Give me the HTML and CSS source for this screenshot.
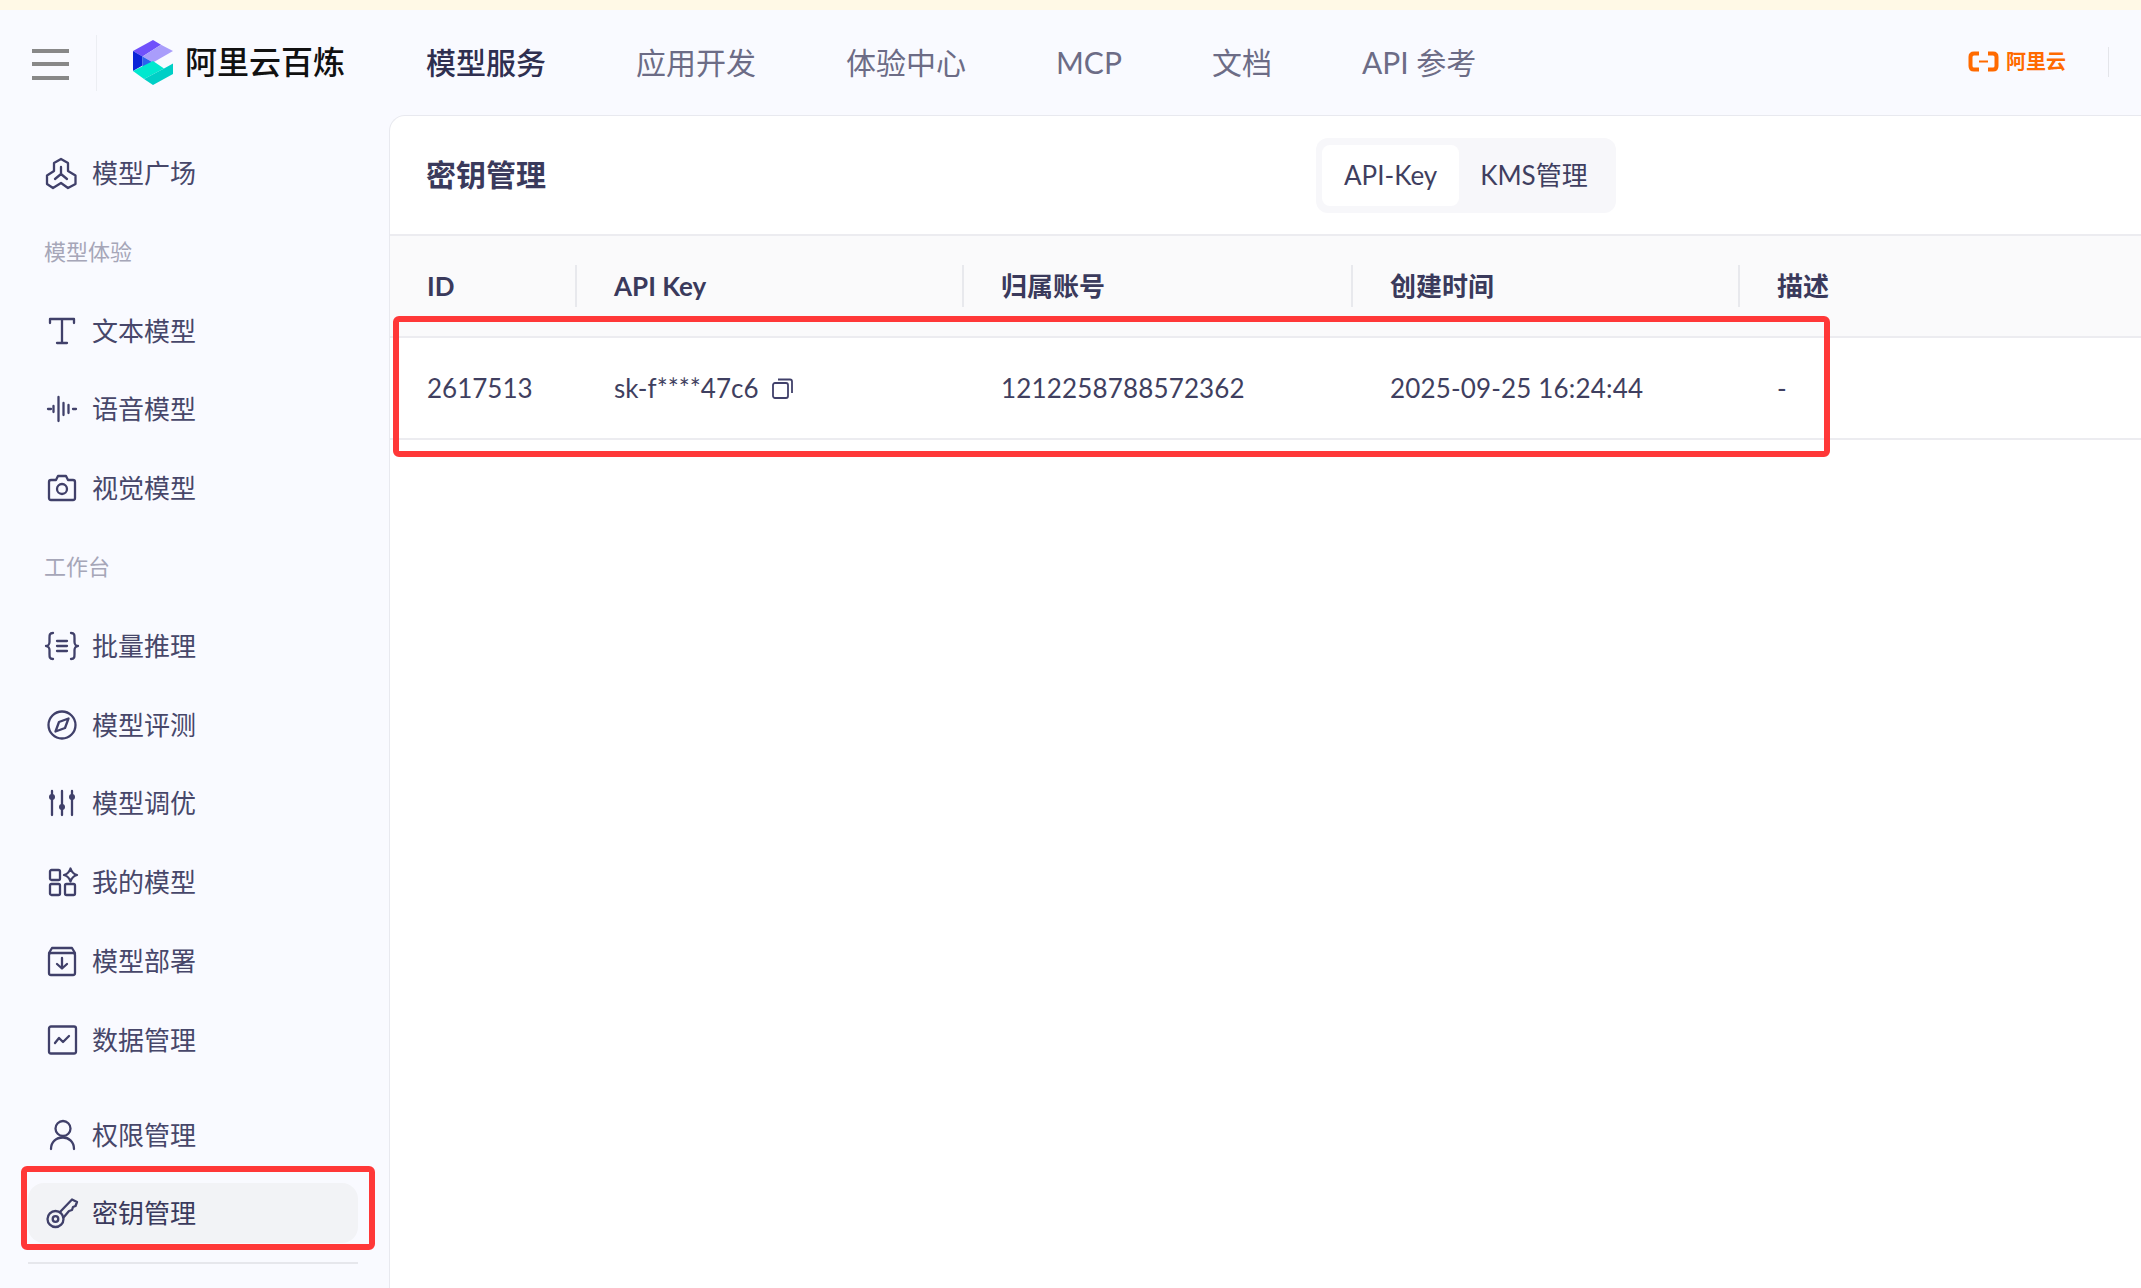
FILE: index.html
```html
<!DOCTYPE html>
<html lang="zh-CN">
<head>
<meta charset="utf-8">
<title>密钥管理</title>
<link rel="stylesheet" href="styles.css">
</head>
<body>
<div class="notice"></div>
<header class="topbar">
  <div class="menu-btn"><span></span><span></span><span></span></div>
  <div class="brand">
    <svg class="logo" viewBox="0 0 40 45" width="40" height="45">
      <polygon points="20,0 28,4.7 9.5,16.5 0,11" fill="#7050fb"/>
      <polygon points="28,4.7 40,11 20,22.5 9.5,16.5" fill="#a99dfb"/>
      <polygon points="0,11 9.5,16.5 9.5,25.5 0,31" fill="#0a24d8"/>
      <polygon points="9.5,16.5 20,22.5 9.5,28" fill="#2b62ee"/>
      <polygon points="0,31 20,21 31,28.5 11,39" fill="#00e8cf"/>
      <polygon points="40,23.5 40,34 20,45 11,39 31,28.5" fill="#00cfc6"/>
    </svg>
    <span class="brand-name">阿里云百炼</span>
  </div>
  <nav class="main-nav">
    <a class="main-link active">模型服务</a>
    <a class="main-link">应用开发</a>
    <a class="main-link">体验中心</a>
    <a class="main-link">MCP</a>
    <a class="main-link">文档</a>
    <a class="main-link">API 参考</a>
  </nav>
  <div class="aliyun">
    <svg viewBox="0 0 31 21" width="31" height="21" fill="none" stroke="#ff6a00">
      <path d="M11 2.5H6Q2.5 2.5 2.5 6V15Q2.5 18.500 6 18.500H11" stroke-width="4"/>
      <path d="M20 2.500H25Q28.500 2.500 28.500 6V15Q28.500 18.500 25 18.500H20" stroke-width="4"/>
      <path d="M11 10.500H20" stroke-width="2"/>
    </svg>
    <span class="aliyun-name">阿里云</span>
  </div>
  <div class="top-divider"></div>
</header>
<div class="workspace">
  <aside class="sidebar">
    <a class="side-item">
      <svg class="ico" viewBox="0 0 30 30"><path d="M14 1L21 5V13L28.500 17.500V26L21 30L14 25L6 30L0 26V17.500L7 13V5Z"/><path d="M14 9V16M14 16L8 21M14 16L20 21"/></svg>
      <span>模型广场</span>
    </a>
    <div class="side-label">模型体验</div>
    <a class="side-item">
      <svg class="ico" viewBox="0 0 30 30"><path d="M3 7V3H27V7M15 3V27M10 27H20"/></svg>
      <span>文本模型</span>
    </a>
    <a class="side-item">
      <svg class="ico" viewBox="0 0 30 30"><path d="M1 15H4M6.500 12V18M11.500 3V27M16.500 9V21M21.500 11V19M26 15H29"/></svg>
      <span>语音模型</span>
    </a>
    <a class="side-item">
      <svg class="ico" viewBox="0 0 30 30"><path d="M4 7H9L11 3H19L21 7H26Q28 7 28 9V25Q28 27 26 27H4Q2 27 2 25V9Q2 7 4 7Z"/><circle cx="15" cy="16" r="5"/></svg>
      <span>视觉模型</span>
    </a>
    <div class="side-label">工作台</div>
    <a class="side-item">
      <svg class="ico" viewBox="0 0 30 30"><path d="M6 2C2.500 2 2.500 4 2.500 7V11C2.500 13 1 15 -1 15C1 15 2.500 17 2.500 19V23C2.500 26 2.500 28 6 28"/><path d="M24 2C27.500 2 27.500 4 27.500 7V11C27.500 13 29 15 31 15C29 15 27.500 17 27.500 19V23C27.500 26 27.500 28 24 28"/><path d="M10 10H20M10 15H20M10 20H20"/></svg>
      <span>批量推理</span>
    </a>
    <a class="side-item">
      <svg class="ico" viewBox="0 0 30 30"><circle cx="15" cy="15" r="13.500"/><path d="M21.500 8.500L18 18L8.500 21.500L12 12Z"/></svg>
      <span>模型评测</span>
    </a>
    <a class="side-item">
      <svg class="ico" viewBox="0 0 30 30"><path d="M5 3V27M15 3V27M25 3V27"/><circle class="dot" cx="5" cy="9" r="3"/><circle class="dot" cx="15" cy="19" r="3"/><circle class="dot" cx="25" cy="9" r="3"/></svg>
      <span>模型调优</span>
    </a>
    <a class="side-item">
      <svg class="ico" viewBox="0 0 30 30"><rect x="3" y="3" width="10" height="10" rx="1.500"/><rect x="3" y="17" width="10" height="11" rx="1.500"/><rect x="18" y="17" width="10" height="11" rx="1.500"/><path d="M23.500 1.500Q25 6.500 30 8Q25 9.500 23.500 14.500Q22 9.500 17 8Q22 6.500 23.500 1.500Z"/></svg>
      <span>我的模型</span>
    </a>
    <a class="side-item">
      <svg class="ico" viewBox="0 0 30 30"><rect x="2" y="7" width="26" height="22" rx="2"/><path d="M2 7L5 2H25L28 7M15 12V22M10 18L15 22.500L20 18"/></svg>
      <span>模型部署</span>
    </a>
    <a class="side-item">
      <svg class="ico" viewBox="0 0 30 30"><rect x="2" y="1.500" width="27" height="27" rx="2"/><path d="M8 18L12 13L16 17L22 11"/></svg>
      <span>数据管理</span>
    </a>
    <a class="side-item group-start">
      <svg class="ico" viewBox="0 0 30 30"><circle cx="16" cy="8.500" r="7.500"/><path d="M4 29C4 22 9 17.500 16 17.500C22 17.500 27 22 27 29"/></svg>
      <span>权限管理</span>
    </a>
    <a class="side-item active">
      <svg class="ico" viewBox="0 0 30 30"><circle cx="8.500" cy="21" r="8"/><circle cx="8.500" cy="21" r="2.800"/><path d="M13 14L25 1.500L30 4L28.500 8L26 9L25 12L22 13L16.500 19.500"/></svg>
      <span>密钥管理</span>
      <i class="callout callout-side"></i>
    </a>
    <div class="side-rule"></div>
  </aside>
  <main class="card">
    <div class="card-head">
      <h1 class="card-title">密钥管理</h1>
      <div class="tabs">
        <a class="tab active">API-Key</a>
        <a class="tab">KMS管理</a>
      </div>
    </div>
    <div class="table">
      <div class="row head">
        <div class="cell">ID</div>
        <div class="cell">API Key</div>
        <div class="cell">归属账号</div>
        <div class="cell">创建时间</div>
        <div class="cell">描述</div>
      </div>
      <div class="row body">
        <div class="cell">2617513</div>
        <div class="cell key-cell">sk-f****47c6
          <svg class="copy" viewBox="0 0 21 21" width="21" height="21"><rect x="1" y="5" width="15" height="15" rx="2"/><path d="M6 1.500H18Q20 1.500 20 3.500V15"/></svg>
        </div>
        <div class="cell num">1212258788572362</div>
        <div class="cell num">2025-09-25 16:24:44</div>
        <div class="cell">-</div>
        <i class="callout callout-row"></i>
      </div>
    </div>
  </main>
</div>
</body>
</html>
```

FILE: styles.css
```css
* { box-sizing: border-box; }
html, body { margin: 0; height: 100%; }
body {
  background: #f9faff;
  color: #3f3f60;
  font-family: "Lato", "Noto Sans CJK SC", sans-serif;
  overflow: hidden;
}
.notice { height: 10px; background: #fff9e6; }

.topbar { height: 105px; display: flex; align-items: center; position: relative; }
.menu-btn {
  width: 37px; height: 31px; margin-left: 32px;
  display: flex; flex-direction: column; justify-content: space-between;
  margin-top: 3px;
}
.menu-btn span { display: block; height: 4px; background: #888; }
.brand {
  height: 56px; margin-left: 27px; padding-left: 36px;
  border-left: 1px solid #eceef3;
  display: flex; align-items: center; gap: 12px;
}
.logo { display: block; }
.brand-name { font-size: 32px; font-weight: 500; color: #111; white-space: nowrap; line-height: 40px; margin-top: -2px; }
.main-nav { display: flex; gap: 90px; margin-left: 81px; margin-top: -2px; }
.main-link { font-size: 30px; line-height: 40px; color: #6c6c86; white-space: nowrap; }
.main-link.active { color: #2f2f50; font-weight: 500; }
.aliyun { position: absolute; left: 1968px; top: 41px; display: flex; align-items: center; gap: 7px; }
.aliyun-name { font-size: 20px; line-height: 21px; color: #ff6a00; font-weight: 700; }
.top-divider { position: absolute; left: 2108px; top: 37px; width: 1px; height: 30px; background: #e4e5ea; }

.workspace { display: flex; height: 1173px; }
.sidebar {
  width: 389px; flex: none;
  padding: 28px 31px 0 28px;
  display: flex; flex-direction: column; gap: 18.8px;
}
.side-item {
  position: relative;
  height: 60px; padding-left: 19px;
  display: flex; align-items: center; gap: 15px;
  font-size: 26px; line-height: 36px; color: #47476a;
  border-radius: 16px;
  flex: none;
}
.side-item.active { background: #f2f3f6; color: #3a3a5c; }
.side-item.group-start { margin-top: 16px; }
.side-label {
  height: 60px; padding-left: 16px; flex: none;
  display: flex; align-items: center;
  font-size: 22px; line-height: 30px; color: #a6a6b8;
}
.ico {
  width: 30px; height: 30px; flex: none; overflow: visible;
  fill: none; stroke: #40406a; stroke-width: 2.300; stroke-linejoin: round; stroke-linecap: round;
}
.ico .dot { fill: #40406a; stroke: none; }
.side-rule { height: 2px; background: #e6e7ec; flex: none; }

.callout {
  position: absolute; display: block;
  border: 6px solid #ff3838; border-radius: 6px;
}
.callout-side { top: -17px; left: -7px; right: -17px; bottom: -7px; }
.callout-row { left: 3px; top: -22px; width: 1437px; height: 141px; }

.card {
  flex: 1; min-width: 0;
  background: #fff;
  border: 1px solid #e8e9ef; border-width: 1px 0 0 1px;
  border-top-left-radius: 16px;
}
.card-head {
  height: 120px; padding-left: 36px;
  border-bottom: 2px solid #ececf0;
  display: flex; align-items: center;
}
.card-title { margin: 0 0 3px; font-size: 30px; line-height: 40px; font-weight: 700; color: #3a3a5c; width: 120px; }
.tabs {
  margin-left: 770px;
  display: flex; padding: 7px 7px 7px 6px; height: 75px;
  background: #f7f7fa; border-radius: 12px;
}
.tab {
  display: flex; align-items: center;
  padding: 0 21px; font-size: 26px; line-height: 36px; color: #3f3f60; border-radius: 8px;
}
.tab.active { background: #fff; padding-left: 22px; padding-right: 22px; }

.row {
  display: grid; position: relative;
  grid-template-columns: 187px 387px 389px 387px 1fr;
  align-items: center;
}
.row.head {
  height: 102px; background: #fafafb;
  border-bottom: 2px solid #ececf0;
  font-size: 26px; line-height: 36px; font-weight: 700; color: #3a3a5c;
}
.row.body { height: 102px; border-bottom: 2px solid #ececf0; font-size: 26px; line-height: 36px; color: #3f3f60; }
.cell { padding-left: 37px; position: relative; }
.cell.num { letter-spacing: .16px; }
.head .cell + .cell::before {
  content: ""; position: absolute; left: -2px; top: -3px; width: 2px; height: 42px;
  background: #e8e9ed;
}
.key-cell { display: flex; align-items: center; gap: 13px; }
.copy { fill: none; stroke: #40406a; stroke-width: 1.800; display: block; }
```
